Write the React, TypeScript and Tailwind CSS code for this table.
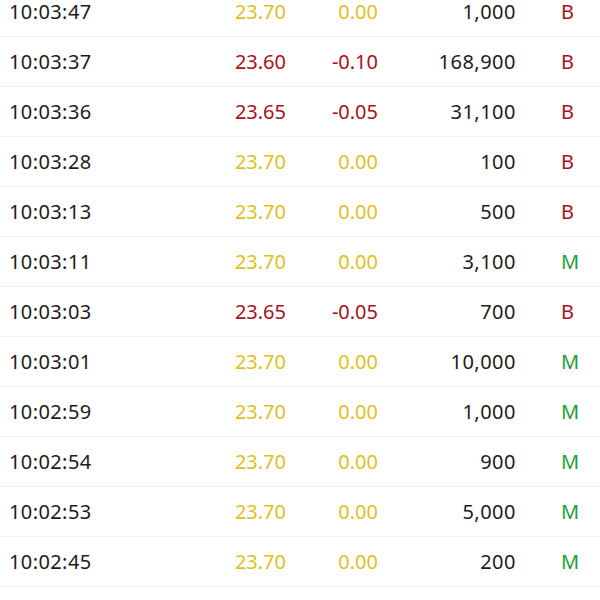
import React from 'react';

type Trade = { time: string; price: string; change: string; volume: string; side: 'B' | 'M' };

const trades: Trade[] = [
  { time: '10:03:47', price: '23.70', change: '0.00', volume: '1,000', side: 'B' },
  { time: '10:03:37', price: '23.60', change: '-0.10', volume: '168,900', side: 'B' },
  { time: '10:03:36', price: '23.65', change: '-0.05', volume: '31,100', side: 'B' },
  { time: '10:03:28', price: '23.70', change: '0.00', volume: '100', side: 'B' },
  { time: '10:03:13', price: '23.70', change: '0.00', volume: '500', side: 'B' },
  { time: '10:03:11', price: '23.70', change: '0.00', volume: '3,100', side: 'M' },
  { time: '10:03:03', price: '23.65', change: '-0.05', volume: '700', side: 'B' },
  { time: '10:03:01', price: '23.70', change: '0.00', volume: '10,000', side: 'M' },
  { time: '10:02:59', price: '23.70', change: '0.00', volume: '1,000', side: 'M' },
  { time: '10:02:54', price: '23.70', change: '0.00', volume: '900', side: 'M' },
  { time: '10:02:53', price: '23.70', change: '0.00', volume: '5,000', side: 'M' },
  { time: '10:02:45', price: '23.70', change: '0.00', volume: '200', side: 'M' },
];

export default function App() {
  return (
    <div className="w-[600px] h-[600px] overflow-hidden bg-white font-['Noto_Sans',sans-serif] text-[20px]">
      <div className="-mt-[13px]">
        {trades.map((t, i) => {
          const down = t.change.startsWith('-');
          const tone = down ? 'text-[#a8111e]' : 'text-[#dfbf22]';
          return (
            <div key={i} className="flex items-center h-[50px] border-b border-[#f0f0f0]">
              <span className="w-[200px] shrink-0 pl-[9px] tracking-[0.4px] text-[#1c1c1c]">{t.time}</span>
              <span className={`w-[86px] shrink-0 text-right ${tone}`}>{t.price}</span>
              <span className={`w-[92px] shrink-0 text-right ${tone}`}>{t.change}</span>
              <span className="w-[138px] shrink-0 text-right tracking-[0.5px] text-[#1c1c1c]">{t.volume}</span>
              <span className={`w-[84px] shrink-0 pl-[45px] ${t.side === 'B' ? 'text-[#a8111e]' : 'text-[#22a133]'}`}>{t.side}</span>
            </div>
          );
        })}
      </div>
    </div>
  );
}
